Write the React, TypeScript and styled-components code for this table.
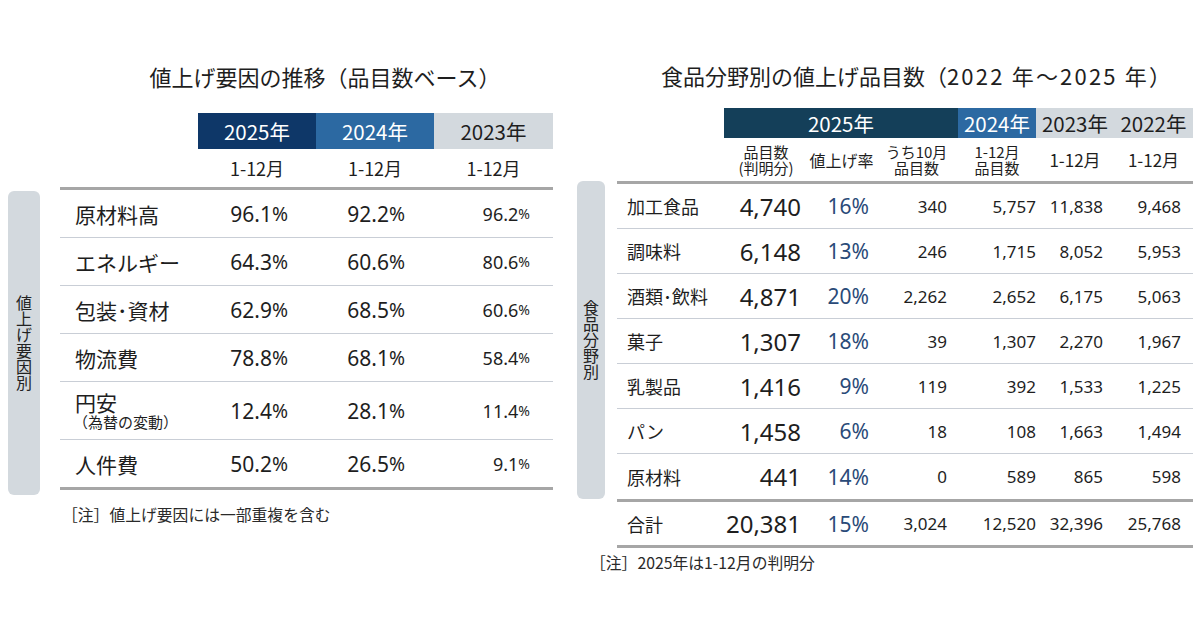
import React from 'react'
import styled, { createGlobalStyle } from 'styled-components'

const GlobalStyle = createGlobalStyle`
    html, body {
        margin: 0;
        padding: 0;
        background: #ffffff;
    }
    body {
        font-family: "Noto Sans CJK JP", sans-serif;
        color: #1e1e1e;
    }
`

const NUM_FONT = '"Noto Sans", "Noto Sans CJK JP", sans-serif'
const THICK = '#a6a6a6'
const THIN = '#c9ced6'
const GREY = '#d3d9de'

const Page = styled.div`
    display: flex;
    align-items: flex-start;
    gap: 24px;
    width: 1200px;
    height: 630px;
    padding-left: 8px;
    box-sizing: border-box;
    overflow: hidden;
`

const Panel = styled.section<{ $width: number }>`
    display: flex;
    flex-direction: column;
    width: ${(p) => p.$width}px;
`

const Title = styled.h2<{ $top: number; $indent: number; $shift: number }>`
    margin: ${(p) => p.$top}px 0 0 ${(p) => p.$indent}px;
    padding-left: ${(p) => p.$shift}px;
    height: 30px;
    line-height: 30px;
    font-size: 22px;
    font-weight: 400;
    text-align: center;
    white-space: nowrap;
    color: #1e1e1e;
`

const TitleYears = styled.span`
    letter-spacing: 2.2px;
`

const HeadGrid = styled.div<{ $cols: string; $indent: number; $top?: number; $h: number }>`
    display: grid;
    grid-template-columns: ${(p) => p.$cols};
    margin: ${(p) => p.$top || 0}px 0 0 ${(p) => p.$indent}px;
    height: ${(p) => p.$h}px;
`

const YearCell = styled.div<{ $bg?: string; $fg?: string; $span?: number }>`
    grid-column: span ${(p) => p.$span || 1};
    display: flex;
    align-items: center;
    justify-content: center;
    background: ${(p) => p.$bg || 'transparent'};
    color: ${(p) => p.$fg || '#1e1e1e'};
    font-size: 20.5px;
    white-space: nowrap;
`

const SubHead = styled.div<{ $size: number }>`
    display: flex;
    align-items: center;
    justify-content: center;
    text-align: center;
    font-size: ${(p) => p.$size}px;
    line-height: 16px;
    white-space: nowrap;
    color: #1e1e1e;
`

const Body = styled.div`
    display: flex;
    align-items: stretch;
`

const SideLabel = styled.div<{ $width: number; $gap: number; $mt: number; $mb: number }>`
    display: flex;
    align-items: center;
    justify-content: center;
    width: ${(p) => p.$width}px;
    margin: ${(p) => p.$mt}px ${(p) => p.$gap}px ${(p) => p.$mb}px 0;
    background: ${GREY};
    border-radius: 6px;
    writing-mode: vertical-rl;
    text-orientation: upright;
    font-size: 16px;
    line-height: 16px;
    color: #222;
`

const Rows = styled.div<{ $closed?: boolean }>`
    display: flex;
    flex-direction: column;
    flex: 1;
    border-top: 3px solid ${THICK};
    border-bottom: ${(p) => (p.$closed ? `3px solid ${THICK}` : 'none')};
`

const Row = styled.div<{ $cols: string; $h: number }>`
    display: grid;
    grid-template-columns: ${(p) => p.$cols};
    height: ${(p) => p.$h}px;
    box-sizing: border-box;
    border-bottom: 1px solid ${THIN};
    &:last-child {
        border-bottom: none;
    }
`

const TotalRow = styled.div<{ $cols: string; $indent: number }>`
    display: grid;
    grid-template-columns: ${(p) => p.$cols};
    margin-left: ${(p) => p.$indent}px;
    height: 49px;
    box-sizing: border-box;
    border-top: 3px solid ${THICK};
    border-bottom: 3px solid ${THICK};
`

const Label = styled.div<{ $size: number; $pad: number }>`
    display: flex;
    flex-direction: column;
    justify-content: center;
    padding-left: ${(p) => p.$pad}px;
    font-size: ${(p) => p.$size}px;
    line-height: 22px;
    white-space: nowrap;
`

const LabelSub = styled.span`
    font-size: 15px;
    line-height: 18px;
    margin-left: -2px;
`

const Value = styled.div<{ $size: number; $pad: number; $color?: string }>`
    display: flex;
    align-items: center;
    justify-content: flex-end;
    padding-right: ${(p) => p.$pad}px;
    font-family: ${NUM_FONT};
    font-size: ${(p) => p.$size}px;
    color: ${(p) => p.$color || '#1e1e1e'};
    white-space: nowrap;
`

const Pct = styled.span<{ $scale: number }>`
    font-size: ${(p) => p.$scale}em;
`

const Note = styled.p<{ $top: number; $indent: number }>`
    margin: ${(p) => p.$top}px 0 0 ${(p) => p.$indent}px;
    font-size: 15.8px;
    line-height: 18px;
    color: #2a2a2a;
    white-space: nowrap;
`

// ---- left: 値上げ要因

const leftCols = '138px 118px 118px 119px'

const factors = [
    { label: '原材料高', v: ['96.1', '92.2', '96.2'] },
    { label: 'エネルギー', v: ['64.3', '60.6', '80.6'] },
    { label: '包装･資材', v: ['62.9', '68.5', '60.6'] },
    { label: '物流費', v: ['78.8', '68.1', '58.4'] },
    { label: '円安', sub: '（為替の変動）', v: ['12.4', '28.1', '11.4'], h: 58 },
    { label: '人件費', v: ['50.2', '26.5', '9.1'], h: 47 },
]

const leftValueStyle = [
    { size: 21, pad: 28, pct: 0.92 },
    { size: 21, pad: 29, pct: 0.92 },
    { size: 18, pad: 23, pct: 0.78 },
]

const FactorPanel = () => (
    <Panel $width={545}>
        <Title $top={61} $indent={52} $shift={37}>
            値上げ要因の推移（品目数ベース）
        </Title>
        <HeadGrid $cols={leftCols} $indent={52} $top={22} $h={36}>
            <YearCell />
            <YearCell $bg="#0e3768" $fg="#fff">2025年</YearCell>
            <YearCell $bg="#2c69a2" $fg="#fff">2024年</YearCell>
            <YearCell $bg={GREY}>2023年</YearCell>
        </HeadGrid>
        <HeadGrid $cols={leftCols} $indent={52} $h={38}>
            <SubHead $size={18} />
            <SubHead $size={18}>1-12月</SubHead>
            <SubHead $size={18}>1-12月</SubHead>
            <SubHead $size={18}>1-12月</SubHead>
        </HeadGrid>
        <Body>
            <SideLabel $width={32} $gap={20} $mt={4} $mb={-5}>
                値上げ要因別
            </SideLabel>
            <Rows $closed>
                {factors.map((f) => (
                    <Row key={f.label} $cols={leftCols} $h={f.h || 48}>
                        <Label $size={21} $pad={15}>
                            <span>{f.label}</span>
                            {f.sub && <LabelSub>{f.sub}</LabelSub>}
                        </Label>
                        {f.v.map((val, i) => (
                            <Value key={i} $size={leftValueStyle[i].size} $pad={leftValueStyle[i].pad}>
                                {val}
                                <Pct $scale={leftValueStyle[i].pct}>%</Pct>
                            </Value>
                        ))}
                    </Row>
                ))}
            </Rows>
        </Body>
        <Note $top={16} $indent={54}>［注］値上げ要因には一部重複を含む</Note>
    </Panel>
)

// ---- right: 食品分野別

const rightCols = '107px 84px 67px 83px 78px 78px 79px'

const foods = [
    ['加工食品', '4,740', '16%', '340', '5,757', '11,838', '9,468'],
    ['調味料', '6,148', '13%', '246', '1,715', '8,052', '5,953'],
    ['酒類･飲料', '4,871', '20%', '2,262', '2,652', '6,175', '5,063'],
    ['菓子', '1,307', '18%', '39', '1,307', '2,270', '1,967'],
    ['乳製品', '1,416', '9%', '119', '392', '1,533', '1,225'],
    ['パン', '1,458', '6%', '18', '108', '1,663', '1,494'],
    ['原材料', '441', '14%', '0', '589', '865', '598'],
]

const total = ['合計', '20,381', '15%', '3,024', '12,520', '32,396', '25,768']

const rightValueStyle = [
    { size: 24, pad: 7 },
    { size: 21, pad: 6, color: '#2a4a78' },
    { size: 17, pad: 11 },
    { size: 17, pad: 0 },
    { size: 17, pad: 11 },
    { size: 17, pad: 12 },
]

const FoodCells = ({ row }: { row: string[] }) => (
    <>
        <Label $size={18} $pad={10}>
            {row[0]}
        </Label>
        {row.slice(1).map((val, i) => (
            <Value
                key={i}
                $size={rightValueStyle[i].size}
                $pad={rightValueStyle[i].pad}
                $color={rightValueStyle[i].color}
            >
                {val}
            </Value>
        ))}
    </>
)

const FoodPanel = () => (
    <Panel $width={616}>
        <Title $top={60} $indent={40} $shift={22}>
            食品分野別の値上げ品目数（<TitleYears>2022 年～2025 年</TitleYears>）
        </Title>
        <HeadGrid $cols={rightCols} $indent={40} $top={18} $h={30}>
            <YearCell />
            <YearCell $span={3} $bg="#143f59" $fg="#fff">
                2025年
            </YearCell>
            <YearCell $bg="#2c69a2" $fg="#fff">2024年</YearCell>
            <YearCell $bg={GREY}>2023年</YearCell>
            <YearCell $bg={GREY}>2022年</YearCell>
        </HeadGrid>
        <HeadGrid $cols={rightCols} $indent={40} $h={43}>
            <SubHead $size={15} />
            <SubHead $size={15}>
                品目数
                <br />
                (判明分)
            </SubHead>
            <SubHead $size={16}>値上げ率</SubHead>
            <SubHead $size={15}>
                うち10月
                <br />
                品目数
            </SubHead>
            <SubHead $size={15}>
                1-12月
                <br />
                品目数
            </SubHead>
            <SubHead $size={17}>1-12月</SubHead>
            <SubHead $size={17}>1-12月</SubHead>
        </HeadGrid>
        <Body>
            <SideLabel $width={28} $gap={12} $mt={0} $mb={0}>
                食品分野別
            </SideLabel>
            <Rows>
                {foods.map((row) => (
                    <Row key={row[0]} $cols={rightCols} $h={45}>
                        <FoodCells row={row} />
                    </Row>
                ))}
            </Rows>
        </Body>
        <TotalRow $cols={rightCols} $indent={40}>
            <FoodCells row={total} />
        </TotalRow>
        <Note $top={6} $indent={13}>［注］2025年は1-12月の判明分</Note>
    </Panel>
)

const App = () => {
    return (
        <>
            <GlobalStyle />
            <Page>
                <FactorPanel />
                <FoodPanel />
            </Page>
        </>
    )
}

export default App
